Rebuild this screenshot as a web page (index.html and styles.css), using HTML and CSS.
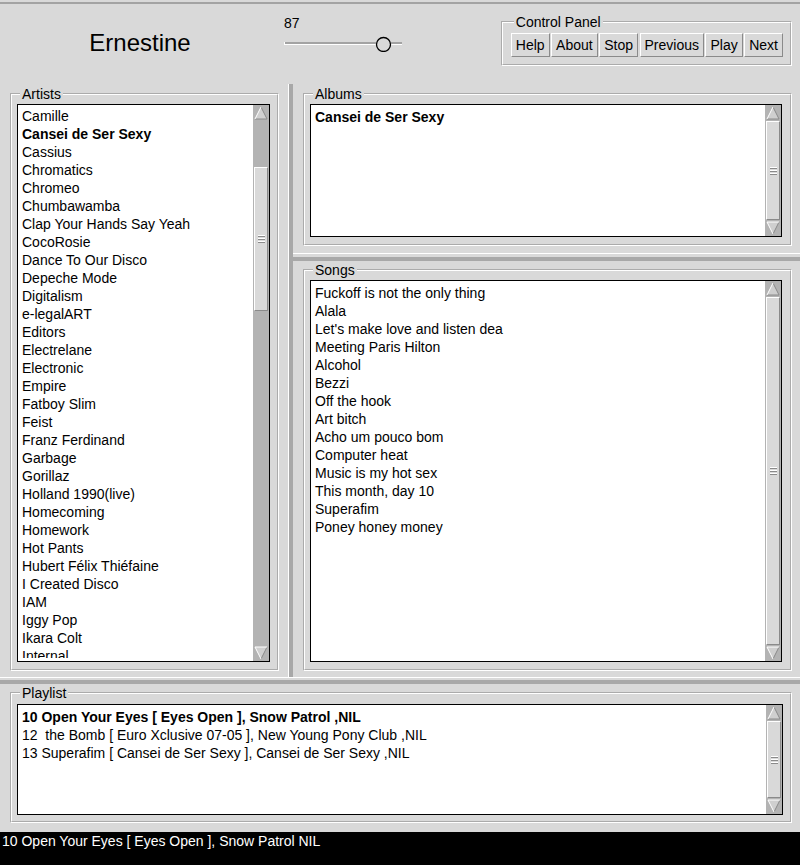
FILE: index.html
```html
<!DOCTYPE html>
<html>
<head>
<meta charset="utf-8">
<title>Ernestine</title>
<link rel="stylesheet" href="styles.css">
</head>
<body>
<div class="app">
  <header class="header">
    <div class="title">Ernestine</div>
    <div class="volume">
      <div class="volume-value">87</div>
      <svg class="volume-track" width="120" height="16" viewBox="0 0 120 16">
        <rect x="0" y="6" width="118" height="2" fill="#a3a3a3"/>
        <rect x="0" y="8" width="118" height="1" fill="#ffffff"/>
        <rect x="0" y="6" width="1" height="3" fill="#ffffff"/>
        <circle cx="99.5" cy="8.5" r="7" fill="#d9d9d9" stroke="#000" stroke-width="1.3"/>
      </svg>
    </div>
    <fieldset class="control">
      <legend>Control Panel</legend>
      <button class="btn">Help</button>
      <button class="btn">About</button>
      <button class="btn">Stop</button>
      <button class="btn">Previous</button>
      <button class="btn">Play</button>
      <button class="btn">Next</button>
    </fieldset>
  </header>

  <div class="main">
    <div class="left-pane">
      <fieldset class="group artists">
        <legend>Artists</legend>
        <div class="listbox lb-artists">
          <div class="items tight">
            <div class="item">Camille</div>
            <div class="item sel">Cansei de Ser Sexy</div>
            <div class="item">Cassius</div>
            <div class="item">Chromatics</div>
            <div class="item">Chromeo</div>
            <div class="item">Chumbawamba</div>
            <div class="item">Clap Your Hands Say Yeah</div>
            <div class="item">CocoRosie</div>
            <div class="item">Dance To Our Disco</div>
            <div class="item">Depeche Mode</div>
            <div class="item">Digitalism</div>
            <div class="item">e-legalART</div>
            <div class="item">Editors</div>
            <div class="item">Electrelane</div>
            <div class="item">Electronic</div>
            <div class="item">Empire</div>
            <div class="item">Fatboy Slim</div>
            <div class="item">Feist</div>
            <div class="item">Franz Ferdinand</div>
            <div class="item">Garbage</div>
            <div class="item">Gorillaz</div>
            <div class="item">Holland 1990(live)</div>
            <div class="item">Homecoming</div>
            <div class="item">Homework</div>
            <div class="item">Hot Pants</div>
            <div class="item">Hubert Félix Thiéfaine</div>
            <div class="item">I Created Disco</div>
            <div class="item">IAM</div>
            <div class="item">Iggy Pop</div>
            <div class="item">Ikara Colt</div>
            <div class="item">Internal</div>
          </div>
          <div class="sb">
            <svg class="sb-arrow" width="14" height="14" viewBox="0 0 14 14"><polygon points="7,1 13,13 1,13" fill="#cfcfcf"/><path d="M7 1 L13 13 L1 13" stroke="#8a8a8a" fill="none"/><path d="M1 13 L7 1" stroke="#fff" fill="none"/></svg>
            <div class="sb-track">
              <div class="sb-thumb part" style="margin-top:46px;height:144px">
                <svg width="7" height="8" viewBox="0 0 7 8"><path d="M0 .5H7M0 3.5H7M0 6.5H7" stroke="#fff"/><path d="M0 1.5H7M0 4.5H7M0 7.5H7" stroke="#8a8a8a"/></svg>
              </div>
            </div>
            <svg class="sb-arrow" width="14" height="14" viewBox="0 0 14 14"><polygon points="1,1 13,1 7,13" fill="#cfcfcf"/><path d="M13 1 L7 13" stroke="#8a8a8a" fill="none"/><path d="M7 13 L1 1 L13 1" stroke="#fff" fill="none"/></svg>
          </div>
        </div>
      </fieldset>
    </div>

    <div class="vsash"></div>

    <div class="right-pane">
      <fieldset class="group albums">
        <legend>Albums</legend>
        <div class="listbox lb-albums">
          <div class="items">
            <div class="item sel">Cansei de Ser Sexy</div>
          </div>
          <div class="sb">
            <svg class="sb-arrow" width="14" height="14" viewBox="0 0 14 14"><polygon points="7,1 13,13 1,13" fill="#cfcfcf"/><path d="M7 1 L13 13 L1 13" stroke="#8a8a8a" fill="none"/><path d="M1 13 L7 1" stroke="#fff" fill="none"/></svg>
            <div class="sb-track">
              <div class="sb-thumb">
                <svg width="7" height="8" viewBox="0 0 7 8"><path d="M0 .5H7M0 3.5H7M0 6.5H7" stroke="#fff"/><path d="M0 1.5H7M0 4.5H7M0 7.5H7" stroke="#8a8a8a"/></svg>
              </div>
            </div>
            <svg class="sb-arrow" width="14" height="14" viewBox="0 0 14 14"><polygon points="1,1 13,1 7,13" fill="#cfcfcf"/><path d="M13 1 L7 13" stroke="#8a8a8a" fill="none"/><path d="M7 13 L1 1 L13 1" stroke="#fff" fill="none"/></svg>
          </div>
        </div>
      </fieldset>

      <div class="hsash-right"></div>

      <fieldset class="group songs">
        <legend>Songs</legend>
        <div class="listbox lb-songs">
          <div class="items">
            <div class="item">Fuckoff is not the only thing</div>
            <div class="item">Alala</div>
            <div class="item">Let's make love and listen dea</div>
            <div class="item">Meeting Paris Hilton</div>
            <div class="item">Alcohol</div>
            <div class="item">Bezzi</div>
            <div class="item">Off the hook</div>
            <div class="item">Art bitch</div>
            <div class="item">Acho um pouco bom</div>
            <div class="item">Computer heat</div>
            <div class="item">Music is my hot sex</div>
            <div class="item">This month, day 10</div>
            <div class="item">Superafim</div>
            <div class="item">Poney honey money</div>
          </div>
          <div class="sb">
            <svg class="sb-arrow" width="14" height="14" viewBox="0 0 14 14"><polygon points="7,1 13,13 1,13" fill="#cfcfcf"/><path d="M7 1 L13 13 L1 13" stroke="#8a8a8a" fill="none"/><path d="M1 13 L7 1" stroke="#fff" fill="none"/></svg>
            <div class="sb-track">
              <div class="sb-thumb">
                <svg width="7" height="8" viewBox="0 0 7 8"><path d="M0 .5H7M0 3.5H7M0 6.5H7" stroke="#fff"/><path d="M0 1.5H7M0 4.5H7M0 7.5H7" stroke="#8a8a8a"/></svg>
              </div>
            </div>
            <svg class="sb-arrow" width="14" height="14" viewBox="0 0 14 14"><polygon points="1,1 13,1 7,13" fill="#cfcfcf"/><path d="M13 1 L7 13" stroke="#8a8a8a" fill="none"/><path d="M7 13 L1 1 L13 1" stroke="#fff" fill="none"/></svg>
          </div>
        </div>
      </fieldset>
    </div>
  </div>

  <div class="hsash"></div>

  <fieldset class="group playlist">
    <legend>Playlist</legend>
    <div class="listbox lb-playlist">
      <div class="items">
        <div class="item sel">10 Open Your Eyes [ Eyes Open ], Snow Patrol ,NIL</div>
        <div class="item">12  the Bomb [ Euro Xclusive 07-05 ], New Young Pony Club ,NIL</div>
        <div class="item">13 Superafim [ Cansei de Ser Sexy ], Cansei de Ser Sexy ,NIL</div>
      </div>
      <div class="sb">
        <svg class="sb-arrow" width="14" height="14" viewBox="0 0 14 14"><polygon points="7,1 13,13 1,13" fill="#cfcfcf"/><path d="M7 1 L13 13 L1 13" stroke="#8a8a8a" fill="none"/><path d="M1 13 L7 1" stroke="#fff" fill="none"/></svg>
        <div class="sb-track">
          <div class="sb-thumb">
            <svg width="7" height="8" viewBox="0 0 7 8"><path d="M0 .5H7M0 3.5H7M0 6.5H7" stroke="#fff"/><path d="M0 1.5H7M0 4.5H7M0 7.5H7" stroke="#8a8a8a"/></svg>
          </div>
        </div>
        <svg class="sb-arrow" width="14" height="14" viewBox="0 0 14 14"><polygon points="1,1 13,1 7,13" fill="#cfcfcf"/><path d="M13 1 L7 13" stroke="#8a8a8a" fill="none"/><path d="M7 13 L1 1 L13 1" stroke="#fff" fill="none"/></svg>
      </div>
    </div>
  </fieldset>

  <div class="status">10 Open Your Eyes [ Eyes Open ], Snow Patrol NIL</div>
</div>
</body>
</html>
```
FILE: styles.css
```css
* { box-sizing: border-box; }
html, body { margin: 0; padding: 0; }
body {
  width: 800px;
  height: 865px;
  overflow: hidden;
  background: #d9d9d9;
  color: #000;
  font-family: "Liberation Sans", Arial, sans-serif;
  font-size: 14px;
}
.app { display: flex; flex-direction: column; height: 865px; }

/* header */
.header {
  margin-top: 2px;
  border-top: 2px solid #a3a3a3;
  height: 82px;
  display: flex;
  align-items: flex-start;
  flex: none;
}
.title {
  width: 284px;
  padding-right: 4px;
  margin-top: 25px;
  text-align: center;
  font-size: 24px;
  line-height: 28px;
}
.volume { width: 120px; margin-top: 11px; display: flex; flex-direction: column; }
.volume-value { line-height: 16px; }
.volume-track { margin-top: 5px; display: block; }

fieldset { min-width: 0; margin: 0; }
legend {
  padding: 0 2px;
  margin-left: 3px;
  font-size: 14px;
  line-height: 16px;
}
.control {
  margin: 10px 8px 0 auto;
  border: 2px groove #fff;
  padding: 3px 7px 7px 8px;
  display: flex;
  gap: 1.5px;
}
.control legend { margin-left: 3px; }
.btn {
  font-family: "Liberation Sans", Arial, sans-serif;
  font-size: 14px;
  line-height: 16px;
  padding: 3px 4px;
  border: 1px solid;
  border-color: #fff #8a8a8a #8a8a8a #fff;
  background: #d9d9d9;
  color: #000;
  margin: 0;
}

/* panes */
.main { display: flex; height: 593px; flex: none; }
.left-pane {
  width: 288px;
  padding: 2px 9px 0 10px;
}
.vsash { width: 5px; border-left: 1px solid #fff; background: #a8a8a8; }
.right-pane { flex: 1; }
.hsash-right {
  margin: 7px 0 1px 0;
  height: 8px;
  border-top: 1px solid #fff;
  border-bottom: 4px solid #a8a8a8;
}
.hsash {
  flex: none;
  height: 7px;
  border-top: 1px solid #fff;
  border-bottom: 4px solid #a8a8a8;
}

.group {
  border: 2px groove #fff;
  padding: 2px 7px 7px 5px;
}
.albums { margin: 2px 8px 0 10px; padding-right: 8px; }
.songs { margin: 0 8px 0 10px; padding-right: 8px; }
.playlist { flex: none; margin: 1px 8px 0 10px; padding: 3px 7px 6px 5px; }

/* listbox */
.listbox {
  display: flex;
  border: 1px solid #000;
  background: #fff;
}
.lb-artists { height: 558px; }
.lb-albums { height: 133px; }
.lb-songs { height: 382px; }
.lb-playlist { height: 111px; }
.items {
  flex: 1;
  min-width: 0;
  overflow: hidden;
  padding: 3px 0 0 4px;
  margin-bottom: 3px;
  line-height: 18px;
}
.items.tight { padding-top: 2px; }
.item { white-space: pre; }
.item.sel { font-weight: bold; }

/* scrollbar */
.sb {
  flex: none;
  width: 16px;
  padding: 1px;
  background: #b3b3b3;
  display: flex;
  flex-direction: column;
}
.sb-arrow { display: block; flex: none; }
.sb-track { flex: 1; min-height: 0; display: flex; flex-direction: column; padding: 1px 0; }
.sb-thumb {
  flex: 1;
  border: 1px solid;
  border-color: #fff #8a8a8a #8a8a8a #fff;
  background: #d9d9d9;
  display: flex;
  align-items: center;
  justify-content: center;
}
.sb-thumb.part { flex: none; }

/* status */
.status {
  flex: none;
  margin-top: auto;
  height: 33px;
  background: #000;
  color: #fff;
  padding-left: 2px;
  line-height: 18px;
  white-space: pre;
}
```
